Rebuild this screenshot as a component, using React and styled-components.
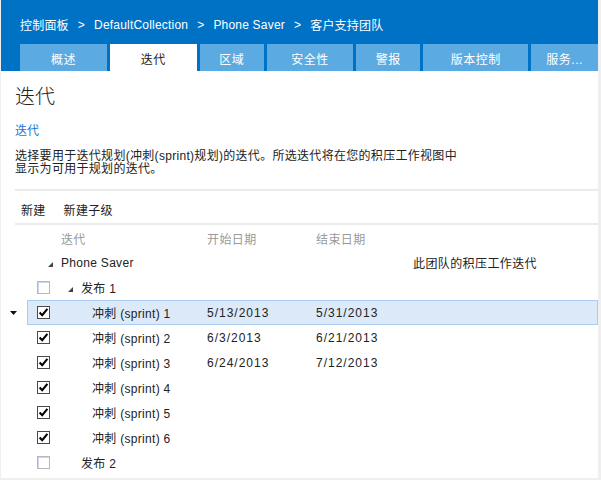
import React from "react";
import styled, { createGlobalStyle } from "styled-components";

const Global = createGlobalStyle`
  html, body { margin: 0; padding: 0; background: #efefef; }
  body {
    font-family: "Liberation Sans", "Noto Sans CJK SC", sans-serif;
    font-size: 12px;
    color: #222;
  }
`;

const Frame = styled.div`
  margin-left: 1px;
  width: 597px;
  height: 478px;
  background: #fff;
  display: flex;
  flex-direction: column;
  overflow: hidden;
`;

const Header = styled.header`
  background: #0072c6;
  padding-left: 19px;
  display: flex;
  flex-direction: column;
`;

const Breadcrumb = styled.nav`
  height: 44px;
  box-sizing: border-box;
  padding-top: 5px;
  display: flex;
  align-items: center;
  gap: 9px;
  color: #fff;
  font-size: 12px;
  letter-spacing: 0.2px;
`;

const Tabs = styled.div`
  display: flex;
  gap: 3px;
  height: 27px;
`;

const Tab = styled.div`
  width: ${(p) => p.$w}px;
  background: ${(p) => (p.$active ? "#fff" : "#5caae2")};
  color: ${(p) => (p.$active ? "#222" : "#fff")};
  display: flex;
  align-items: center;
  justify-content: center;
  font-size: 12px;
  letter-spacing: 0.5px;
  padding-top: 1px;
  box-sizing: border-box;
`;

const Content = styled.section`
  padding-left: 14px;
  display: flex;
  flex-direction: column;
`;

const Title = styled.h1`
  margin: 13px 0 0;
  font-size: 20px;
  line-height: 26px;
  font-weight: 300;
  color: #222;
`;

const Link = styled.a`
  margin-top: 13px;
  line-height: 16px;
  color: #1a76d2;
  text-decoration: none;
`;

const Desc = styled.p`
  margin: 11px 0 0;
  line-height: 13px;
  letter-spacing: 0.3px;
`;

const Rule = styled.div`
  height: 2px;
  background: #ebebeb;
  margin-top: ${(p) => p.$mt || 0}px;
`;

const Toolbar = styled.div`
  height: 32px;
  box-sizing: border-box;
  padding: 4px 0 0 6px;
  display: flex;
  align-items: center;
  gap: 18px;
  letter-spacing: 0.3px;
`;

const Table = styled.div`
  display: flex;
  flex-direction: column;
  padding-top: 1px;
`;

const Row = styled.div`
  display: flex;
  height: ${(p) => (p.$head ? 24 : 25)}px;
`;

const Indicator = styled.div`
  width: 26px;
  padding-left: 9px;
  box-sizing: border-box;
  display: flex;
  align-items: center;
  padding-top: 1px;
`;

const RowBody = styled.div`
  flex: 1;
  display: flex;
  align-items: center;
  background: ${(p) => (p.$selected ? "#dce9f9" : "transparent")};
  box-shadow: ${(p) => (p.$selected ? "inset 0 0 0 1px #a9cdf1" : "none")};
  color: ${(p) => (p.$head ? "#9a9a9a" : "#222")};
  letter-spacing: 0.3px;
`;

const CheckCell = styled.div`
  width: 34px;
  padding-left: 10px;
  box-sizing: border-box;
  display: flex;
  align-items: center;
`;

const NameCell = styled.div`
  width: 146px;
  box-sizing: border-box;
  padding-left: ${(p) => p.$indent}px;
  display: flex;
  align-items: center;
`;

const Expander = styled.span`
  width: 13px;
  margin-left: -13px;
  display: inline-flex;
  align-items: center;
  padding-top: 3px;
`;

const Cell = styled.div`
  width: ${(p) => (p.$w ? `${p.$w}px` : "auto")};
  flex: ${(p) => (p.$w ? "none" : 1)};
  letter-spacing: ${(p) => (p.$num ? "1px" : "0.4px")};
`;

const Box = styled.span`
  width: 13px;
  height: 13px;
  box-sizing: border-box;
  border: 1px solid ${(p) => (p.$checked ? "#4a4a4a" : "#b8b8b8")};
  box-shadow: ${(p) => (p.$checked ? "none" : "inset 1px 1px 0 #c9d6ee")};
  background: #fff;
  display: inline-flex;
  align-items: center;
  justify-content: center;
`;

const Checkbox = ({ checked }) => (
  <Box $checked={checked}>
    {checked && (
      <svg width="11" height="11" viewBox="0 0 11 11">
        <path d="M1.6 5.6 L4.2 8.2 L9.4 1.8" fill="none" stroke="#000" strokeWidth="2.1" />
      </svg>
    )}
  </Box>
);

const Tri = () => (
  <svg width="5" height="5" viewBox="0 0 5 5">
    <polygon points="5,0 5,5 0,5" fill="#444" />
  </svg>
);

const Arrow = () => (
  <svg width="7" height="4" viewBox="0 0 7 4">
    <polygon points="0,0 7,0 3.5,4" fill="#111" />
  </svg>
);

const tabs = [
  ["概述", 87],
  ["迭代", 87, true],
  ["区域", 64],
  ["安全性", 87],
  ["警报", 64],
  ["版本控制", 105],
  ["服务...", 67],
];

const rows = [
  { name: "Phone Saver", indent: 0, expander: true, extra: "此团队的积压工作迭代", noCheck: true },
  { name: "发布 1", indent: 20, expander: true, checked: false },
  { name: "冲刺 (sprint) 1", indent: 31, checked: true, start: "5/13/2013", end: "5/31/2013", selected: true },
  { name: "冲刺 (sprint) 2", indent: 31, checked: true, start: "6/3/2013", end: "6/21/2013" },
  { name: "冲刺 (sprint) 3", indent: 31, checked: true, start: "6/24/2013", end: "7/12/2013" },
  { name: "冲刺 (sprint) 4", indent: 31, checked: true },
  { name: "冲刺 (sprint) 5", indent: 31, checked: true },
  { name: "冲刺 (sprint) 6", indent: 31, checked: true },
  { name: "发布 2", indent: 20, checked: false },
];

export default function App() {
  return (
    <>
      <Global />
      <Frame>
        <Header>
          <Breadcrumb>
            <span>控制面板</span>
            <span>&gt;</span>
            <span>DefaultCollection</span>
            <span>&gt;</span>
            <span>Phone Saver</span>
            <span>&gt;</span>
            <span>客户支持团队</span>
          </Breadcrumb>
          <Tabs>
            {tabs.map(([label, w, active]) => (
              <Tab key={label} $w={w} $active={active}>
                {label}
              </Tab>
            ))}
          </Tabs>
        </Header>
        <Content>
          <Title>迭代</Title>
          <Link href="#">迭代</Link>
          <Desc>
            选择要用于迭代规划(冲刺(sprint)规划)的迭代。所选迭代将在您的积压工作视图中
            <br />
            显示为可用于规划的迭代。
          </Desc>
          <Rule $mt={13} />
          <Toolbar>
            <span>新建</span>
            <span>新建子级</span>
          </Toolbar>
          <Rule />
        </Content>
        <Table>
          <Row $head>
            <Indicator />
            <RowBody $head>
              <CheckCell />
              <NameCell $indent={0}>迭代</NameCell>
              <Cell $w={109}>开始日期</Cell>
              <Cell $w={97}>结束日期</Cell>
              <Cell />
            </RowBody>
          </Row>
          {rows.map((r) => (
            <Row key={r.name}>
              <Indicator>{r.selected && <Arrow />}</Indicator>
              <RowBody $selected={r.selected}>
                <CheckCell>{!r.noCheck && <Checkbox checked={r.checked} />}</CheckCell>
                <NameCell $indent={r.indent}>
                  {r.expander && (
                    <Expander>
                      <Tri />
                    </Expander>
                  )}
                  {r.name}
                </NameCell>
                <Cell $w={109} $num>{r.start}</Cell>
                <Cell $w={97} $num>{r.end}</Cell>
                <Cell>{r.extra}</Cell>
              </RowBody>
            </Row>
          ))}
        </Table>
      </Frame>
    </>
  );
}
